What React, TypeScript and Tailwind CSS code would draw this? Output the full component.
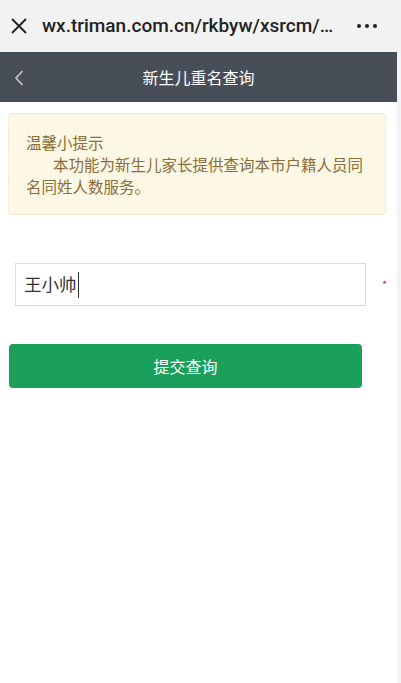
const cjk = '"Noto Sans CJK SC", "Noto Sans", sans-serif'

function CloseIcon() {
  return (
    <svg width="16" height="16" viewBox="0 0 16 16" className="shrink-0">
      <path d="M1 1 L15 15 M15 1 L1 15" stroke="#1f1f1f" strokeWidth="1.8" fill="none" />
    </svg>
  )
}

function BackIcon() {
  return (
    <svg width="10" height="16" viewBox="0 0 10 16">
      <path d="M8.5 1 L2 8 L8.5 15" stroke="#c9ccd0" strokeWidth="1.6" fill="none" />
    </svg>
  )
}

export default function App() {
  return (
    <div className="flex min-h-[683px] w-full flex-col bg-[#f3f3f3]" style={{ fontFamily: cjk }}>
      {/* browser chrome */}
      <div className="flex h-[52px] shrink-0 items-center bg-[#f2f2f2] pl-[11px] pr-[24px]">
        <CloseIcon />
        <div
          className="ml-[15px] flex-1 whitespace-nowrap text-[19px] font-medium text-[#222]"
          style={{ fontFamily: 'Roboto, "Liberation Sans", sans-serif' }}
        >
          wx.triman.com.cn/rkbyw/xsrcm/…
        </div>
        <div className="flex gap-[4px]">
          <span className="h-[4px] w-[4px] rounded-full bg-[#222]" />
          <span className="h-[4px] w-[4px] rounded-full bg-[#222]" />
          <span className="h-[4px] w-[4px] rounded-full bg-[#222]" />
        </div>
      </div>

      <div className="flex flex-1">
        <div className="flex w-[397px] flex-col bg-white">
          {/* nav bar */}
          <div className="relative flex h-[50px] items-center justify-center bg-[#474e58]">
            <div className="absolute left-[14px] top-[18px]">
              <BackIcon />
            </div>
            <span className="text-[16px] text-white">新生儿重名查询</span>
          </div>

          {/* tip */}
          <div className="mx-[8px] mt-[11px] w-[378px] rounded-[4px] border border-[#f3ead2] bg-[#fcf8e5] px-[17px] py-[17px] text-[15.5px] leading-[22px] text-[#8a6d3b]">
            <p>温馨小提示</p>
            <p className="indent-[27px]">本功能为新生儿家长提供查询本市户籍人员同名同姓人数服务。</p>
          </div>

          {/* form */}
          <div className="mt-[48px] flex items-center pl-[15px]">
            <div className="flex h-[43px] w-[351px] items-center border border-[#dcdcdc] bg-white px-[8px] text-[17.5px] text-[#333]">
              <span>王小帅</span>
              <span className="ml-[1px] h-[26px] w-[1.5px] bg-[#333]" />
            </div>
            <span className="ml-[16px] text-[11px] leading-none text-[#c0392b]">*</span>
          </div>

          <button className="ml-[9px] mt-[38px] h-[44px] w-[353px] rounded-[4px] bg-[#1ba05b] text-[16px] text-white">
            提交查询
          </button>
        </div>
      </div>
    </div>
  )
}
